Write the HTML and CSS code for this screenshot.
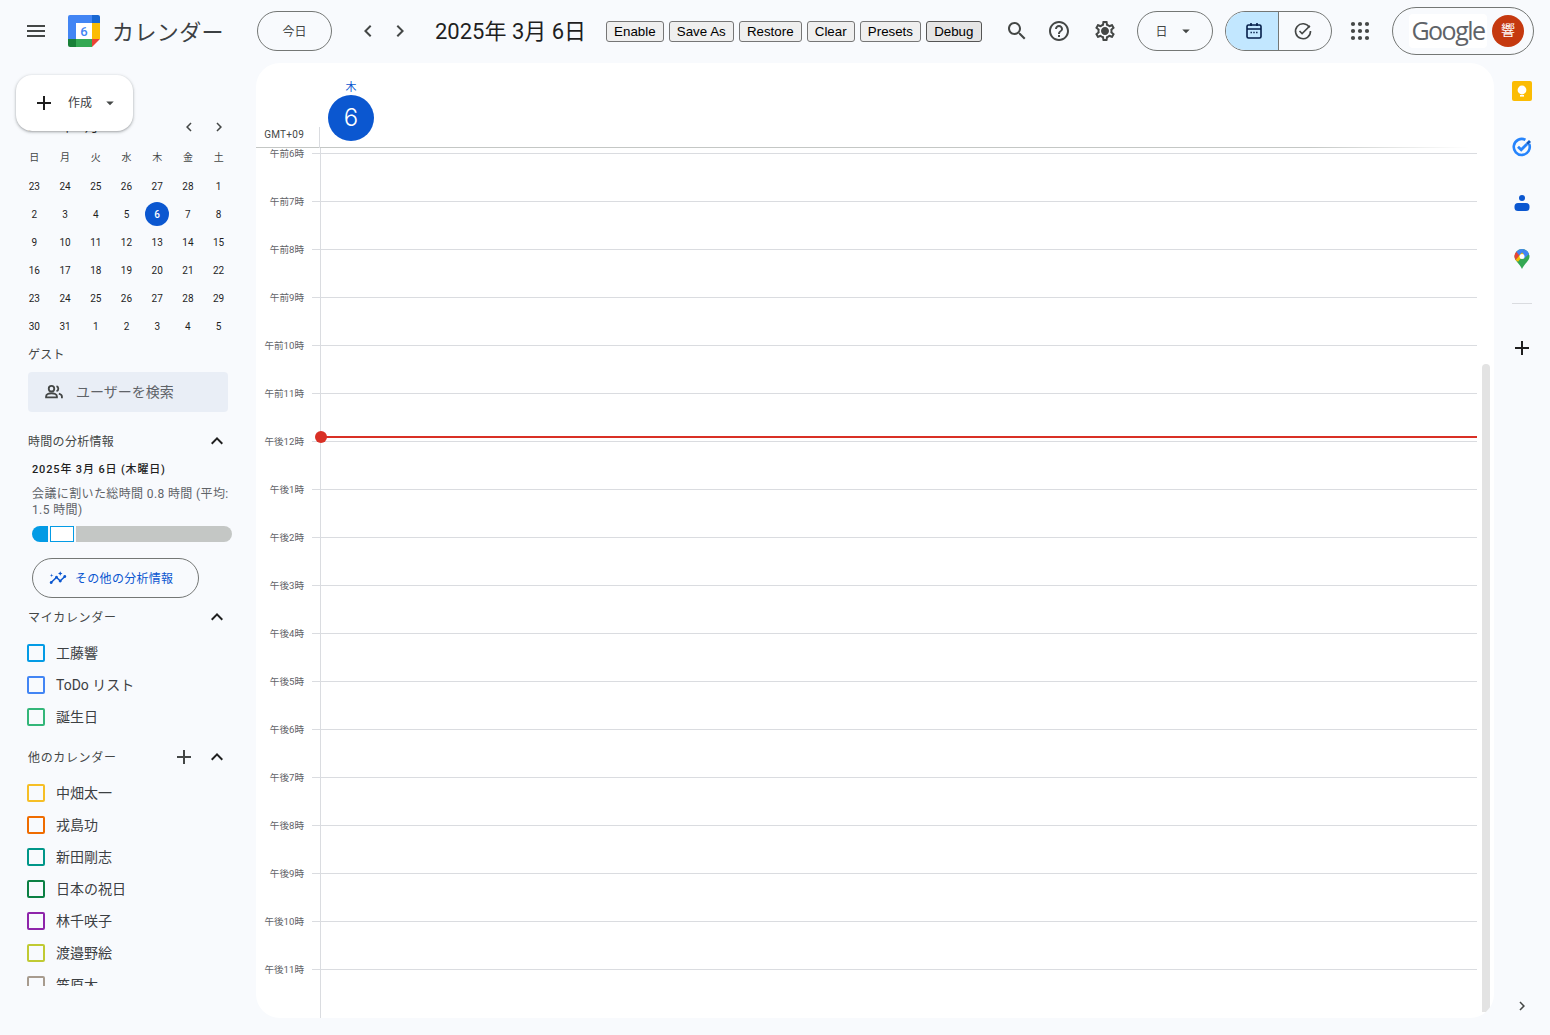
FILE: index.html
```html
<!DOCTYPE html>
<html lang="ja">
<head>
    <meta charset="UTF-8">
    <meta name="viewport" content="width=device-width, initial-scale=1.0">
    <title>カレンダー</title>
    <link rel="stylesheet" href="styles.css">
</head>
<body>
    <svg class="defs" width="0" height="0">
        <symbol id="i-menu" viewBox="0 0 24 24"><path d="M3 18h18v-2H3v2zm0-5h18v-2H3v2zm0-7v2h18V6H3z"/></symbol>
        <symbol id="i-left" viewBox="0 0 24 24"><path d="M15.41 7.41L14 6l-6 6 6 6 1.41-1.41L10.83 12z"/></symbol>
        <symbol id="i-right" viewBox="0 0 24 24"><path d="M10 6L8.59 7.41 13.17 12l-4.58 4.59L10 18l6-6z"/></symbol>
        <symbol id="i-up" viewBox="0 0 24 24"><path d="M12 8l-6 6 1.41 1.41L12 10.83l4.59 4.58L18 14z"/></symbol>
        <symbol id="i-add" viewBox="0 0 24 24"><path d="M19 13h-6v6h-2v-6H5v-2h6V5h2v6h6v2z"/></symbol>
        <symbol id="i-drop" viewBox="0 0 24 24"><path d="M7 10l5 5 5-5z"/></symbol>
    </svg>

    <header class="topbar">
        <button class="icon-btn menu-btn"><svg class="ico24"><use href="#i-menu"/></svg></button>
        <svg class="logo" viewBox="0 0 32 32" width="32" height="32">
            <path d="M2 0h22v8H8v16H0V2a2 2 0 0 1 2-2z" fill="#4285f4"/>
            <path d="M24 0h6a2 2 0 0 1 2 2v6h-8z" fill="#1967d2"/>
            <rect x="24" y="8" width="8" height="16" fill="#fbbc04"/>
            <rect x="8" y="24" width="16" height="8" fill="#34a853"/>
            <path d="M0 24h8v8H2a2 2 0 0 1-2-2z" fill="#188038"/>
            <path d="M24 24h8l-8 8z" fill="#ea4335"/>
            <rect x="8" y="8" width="16" height="16" fill="#fff"/>
            <text x="16" y="21" text-anchor="middle" class="logo-num">6</text>
        </svg>
        <span class="brand">カレンダー</span>
        <button class="pill today">今日</button>
        <button class="icon-btn nav-prev"><svg class="ico24"><use href="#i-left"/></svg></button>
        <button class="icon-btn nav-next"><svg class="ico24"><use href="#i-right"/></svg></button>
        <span class="date-title">2025年 3月 6日</span>
        <div class="ext-btns">
            <button class="ext">Enable</button>
            <button class="ext">Save As</button>
            <button class="ext">Restore</button>
            <button class="ext">Clear</button>
            <button class="ext">Presets</button>
            <button class="ext ext-on">Debug</button>
        </div>
        <button class="icon-btn search-btn">
            <svg class="ico24" viewBox="0 0 24 24"><path d="M15.5 14h-.79l-.28-.27C15.41 12.59 16 11.11 16 9.5 16 5.91 13.09 3 9.5 3S3 5.91 3 9.5 5.91 16 9.5 16c1.61 0 3.09-.59 4.23-1.57l.27.28v.79l5 4.99L20.49 19l-4.99-5zm-6 0C7.01 14 5 11.99 5 9.5S7.01 5 9.5 5 14 7.01 14 9.5 11.99 14 9.5 14z"/></svg>
        </button>
        <button class="icon-btn help-btn">
            <svg class="ico24" viewBox="0 0 24 24"><path d="M11 18h2v-2h-2v2zm1-16C6.48 2 2 6.48 2 12s4.48 10 10 10 10-4.48 10-10S17.52 2 12 2zm0 18c-4.41 0-8-3.59-8-8s3.59-8 8-8 8 3.59 8 8-3.59 8-8 8zm0-14c-2.21 0-4 1.79-4 4h2c0-1.1.9-2 2-2s2 .9 2 2c0 2-3 1.75-3 5h2c0-2.25 3-2.5 3-5 0-2.21-1.79-4-4-4z"/></svg>
        </button>
        <button class="icon-btn gear-btn">
            <svg class="ico24" viewBox="0 0 24 24"><path d="M19.43 12.98c.04-.32.07-.64.07-.98 0-.34-.03-.66-.07-.98l2.11-1.65c.19-.15.24-.42.12-.64l-2-3.46c-.09-.16-.26-.25-.44-.25-.06 0-.12.01-.17.03l-2.49 1c-.52-.4-1.08-.73-1.69-.98l-.38-2.65C14.46 2.18 14.25 2 14 2h-4c-.25 0-.46.18-.49.42l-.38 2.65c-.61.25-1.17.59-1.69.98l-2.49-1c-.06-.02-.12-.03-.18-.03-.17 0-.34.09-.43.25l-2 3.46c-.13.22-.07.49.12.64l2.11 1.65c-.04.32-.07.65-.07.98 0 .33.03.66.07.98l-2.11 1.65c-.19.15-.24.42-.12.64l2 3.46c.09.16.26.25.44.25.06 0 .12-.01.17-.03l2.49-1c.52.4 1.08.73 1.69.98l.38 2.65c.03.24.24.42.49.42h4c.25 0 .46-.18.49-.42l.38-2.65c.61-.25 1.17-.59 1.69-.98l2.49 1c.06.02.12.03.18.03.17 0 .34-.09.43-.25l2-3.46c.12-.22.07-.49-.12-.64l-2.11-1.65zm-1.98-1.71c.04.31.05.52.05.73 0 .21-.02.43-.05.73l-.14 1.13.89.7 1.08.84-.7 1.21-1.27-.51-1.04-.42-.9.68c-.43.32-.84.56-1.25.73l-1.06.43-.16 1.13-.2 1.35h-1.4l-.19-1.35-.16-1.13-1.06-.43c-.43-.18-.83-.41-1.23-.71l-.91-.7-1.06.43-1.27.51-.7-1.21 1.08-.84.89-.7-.14-1.13c-.03-.31-.05-.54-.05-.74s.02-.43.05-.73l.14-1.13-.89-.7-1.08-.84.7-1.21 1.27.51 1.04.42.9-.68c.43-.32.84-.56 1.25-.73l1.06-.43.16-1.13.2-1.35h1.39l.19 1.35.16 1.13 1.06.43c.43.18.83.41 1.23.71l.91.7 1.06-.43 1.27-.51.7 1.21-1.07.85-.89.7.14 1.13zM12 8c-2.21 0-4 1.79-4 4s1.79 4 4 4 4-1.79 4-4-1.79-4-4-4z"/></svg>
        </button>
        <button class="pill view-select"><span>日</span><svg class="ico18"><use href="#i-drop"/></svg></button>
        <div class="toggle">
            <span class="toggle-item toggle-on">
                <svg width="20" height="20" viewBox="0 0 20 20" fill="none" stroke="#041e49" stroke-width="1.6"><rect x="3" y="4" width="14" height="13" rx="1.5"/><path d="M3 8h14M7 2v3M13 2v3"/><path d="M6.5 11.5h1.4M9.3 11.5h1.4M12.1 11.5h1.4" stroke-width="1.3"/></svg>
            </span>
            <span class="toggle-item toggle-off">
                <svg width="20" height="20" viewBox="0 0 20 20" fill="none" stroke="#444746" stroke-width="1.6"><path d="M16.5 6.500A7.500 7.500 0 1 0 17.500 10"/><path d="M6.500 10l2.600 2.600L17 4.800"/></svg>
            </span>
        </div>
        <button class="icon-btn apps-btn">
            <svg width="24" height="24" viewBox="0 0 24 24" fill="#444746"><circle cx="5" cy="5" r="2.1"/><circle cx="12" cy="5" r="2.1"/><circle cx="19" cy="5" r="2.1"/><circle cx="5" cy="12" r="2.1"/><circle cx="12" cy="12" r="2.1"/><circle cx="19" cy="12" r="2.1"/><circle cx="5" cy="19" r="2.1"/><circle cx="12" cy="19" r="2.1"/><circle cx="19" cy="19" r="2.1"/></svg>
        </button>
        <div class="account">
            <span class="google-word">Google</span>
            <span class="avatar">響</span>
        </div>
    </header>

    <div class="content">
        <aside class="sidebar">
            <button class="create">
                <svg class="ico-create"><use href="#i-add"/></svg>
                <span>作成</span>
                <svg class="ico18"><use href="#i-drop"/></svg>
            </button>

            <div class="mini-nav">
                <span class="mini-title">2025年 3月</span>
                <svg class="ico18"><use href="#i-left"/></svg>
                <svg class="ico18"><use href="#i-right"/></svg>
            </div>
            <div class="mini-cal">
                <span class="dow">日</span><span class="dow">月</span><span class="dow">火</span><span class="dow">水</span><span class="dow">木</span><span class="dow">金</span><span class="dow">土</span>
                <span>23</span><span>24</span><span>25</span><span>26</span><span>27</span><span>28</span><span>1</span>
                <span>2</span><span>3</span><span>4</span><span>5</span><span class="sel">6</span><span>7</span><span>8</span>
                <span>9</span><span>10</span><span>11</span><span>12</span><span>13</span><span>14</span><span>15</span>
                <span>16</span><span>17</span><span>18</span><span>19</span><span>20</span><span>21</span><span>22</span>
                <span>23</span><span>24</span><span>25</span><span>26</span><span>27</span><span>28</span><span>29</span>
                <span>30</span><span>31</span><span>1</span><span>2</span><span>3</span><span>4</span><span>5</span>
            </div>

            <div class="guest-label">ゲスト</div>
            <div class="guest-search">
                <svg class="people" width="20" height="20" viewBox="0 0 24 24" fill="none" stroke="#444746" stroke-width="2.2"><circle cx="9" cy="8" r="3.300"/><path d="M2.500 18.500v-1.200c0-2.300 3.300-3.800 6.500-3.800s6.500 1.500 6.500 3.800v1.200z"/><path d="M15 4.900a3.300 3.300 0 0 1 0 6.200"/><path d="M17.800 13.900c2 .6 3.700 1.800 3.700 3.500v2.100"/></svg>
                <span>ユーザーを検索</span>
            </div>

            <div class="sec-head insights-head">
                <span>時間の分析情報</span>
                <svg class="ico24 chev"><use href="#i-up"/></svg>
            </div>
            <div class="ins-date">2025年 3月 6日 (木曜日)</div>
            <div class="ins-desc">会議に割いた総時間 0.8 時間 (平均: 1.5 時間)</div>
            <div class="ins-bar">
                <span class="bar-a"></span>
                <span class="bar-b"></span>
                <span class="bar-c"></span>
            </div>
            <button class="more-btn">
                <svg width="18" height="18" viewBox="0 0 24 24" fill="#0b57d0"><path d="M21 8c-1.45 0-2.26 1.44-1.93 2.51l-3.55 3.56c-.3-.09-.74-.09-1.04 0l-2.55-2.55C12.27 10.45 11.46 9 10 9c-1.45 0-2.27 1.44-1.93 2.52l-4.56 4.55C2.44 15.74 1 16.55 1 18c0 1.1.9 2 2 2 1.45 0 2.26-1.44 1.93-2.51l4.55-4.56c.3.09.74.09 1.04 0l2.55 2.55C12.73 16.55 13.54 18 15 18c1.45 0 2.27-1.44 1.93-2.52l3.56-3.55C21.56 12.26 23 11.45 23 10c0-1.1-.9-2-2-2z"/><path d="M15 9l.94-2.07L18 6l-2.06-.93L15 3l-.92 2.07L12 6l2.08.93zM3.500 11L4 9l2-.5L4 8l-.5-2L3 8l-2 .5L3 9z"/></svg>
                <span>その他の分析情報</span>
            </button>

            <div class="sec-head mine-head">
                <span>マイカレンダー</span>
                <svg class="ico24 chev"><use href="#i-up"/></svg>
            </div>
            <ul class="cal-list">
                <li><i class="box c-sky"></i>工藤響</li>
                <li><i class="box c-blue"></i>ToDo リスト</li>
                <li><i class="box c-mint"></i>誕生日</li>
            </ul>

            <div class="sec-head other-head">
                <span>他のカレンダー</span>
                <svg class="ico24 add-cal"><use href="#i-add"/></svg>
                <svg class="ico24 chev"><use href="#i-up"/></svg>
            </div>
            <ul class="cal-list">
                <li><i class="box c-yellow"></i>中畑太一</li>
                <li><i class="box c-orange"></i>戎島功</li>
                <li><i class="box c-teal"></i>新田剛志</li>
                <li><i class="box c-green"></i>日本の祝日</li>
                <li><i class="box c-purple"></i>林千咲子</li>
                <li><i class="box c-olive"></i>渡邉野絵</li>
                <li><i class="box c-brown"></i>笠原大</li>
            </ul>
        </aside>

        <main class="card">
            <div class="day-head">
                <div class="day-col">
                    <span class="day-dow">木</span>
                    <span class="day-num">6</span>
                </div>
                <span class="tz">GMT+09</span>
            </div>
            <div class="hours">
                <div class="hour"><span>午前6時</span><i></i></div>
                <div class="hour"><span>午前7時</span><i></i></div>
                <div class="hour"><span>午前8時</span><i></i></div>
                <div class="hour"><span>午前9時</span><i></i></div>
                <div class="hour"><span>午前10時</span><i></i></div>
                <div class="hour"><span>午前11時</span><i></i></div>
                <div class="hour"><span>午後12時</span><i></i></div>
                <div class="hour"><span>午後1時</span><i></i></div>
                <div class="hour"><span>午後2時</span><i></i></div>
                <div class="hour"><span>午後3時</span><i></i></div>
                <div class="hour"><span>午後4時</span><i></i></div>
                <div class="hour"><span>午後5時</span><i></i></div>
                <div class="hour"><span>午後6時</span><i></i></div>
                <div class="hour"><span>午後7時</span><i></i></div>
                <div class="hour"><span>午後8時</span><i></i></div>
                <div class="hour"><span>午後9時</span><i></i></div>
                <div class="hour"><span>午後10時</span><i></i></div>
                <div class="hour"><span>午後11時</span><i></i></div>
                <div class="now-line"></div>
                <div class="scrollbar"></div>
            </div>
        </main>

        <nav class="rail">
            <span class="rail-item">
                <svg width="20" height="20" viewBox="0 0 20 20"><rect width="20" height="20" rx="2" fill="#fbbc04"/><circle cx="10" cy="9" r="4.400" fill="#fff"/><rect x="8" y="14" width="4" height="1.600" fill="#fff"/></svg>
            </span>
            <span class="rail-item">
                <svg width="20" height="20" viewBox="0 0 20 20" fill="none" stroke="#2684fc" stroke-width="2.600"><path d="M17.200 7a8 8 0 1 1-3.800-4.200"/><path d="M6 9.800l3.200 3L15 7" stroke-width="2.800"/><path d="M15 7l3-3" stroke="#0f5bc4" stroke-width="2.800"/></svg>
            </span>
            <span class="rail-item">
                <svg width="20" height="20" viewBox="0 0 20 20" fill="#0b57d0"><circle cx="10" cy="5" r="3"/><rect x="2.500" y="10" width="15" height="8" rx="3.500"/></svg>
            </span>
            <span class="rail-item">
                <svg width="16" height="20" viewBox="0 0 16 20"><path d="M8 0a7.500 7.500 0 0 1 7.500 7.500C15.500 12 10 15 8 20 6 15 .5 12 .5 7.500A7.500 7.500 0 0 1 8 0z" fill="#34a853"/><path d="M2.300 2.700A7.500 7.500 0 0 0 .5 7.500c0 1.300.5 2.400 1.100 3.400L8 3.500z" fill="#ea4335"/><path d="M2.300 2.700A7.500 7.500 0 0 1 8 0c.9 0 1.800.2 2.600.5L5.400 6.500z" fill="#4285f4"/><path d="M10.600.5a7.500 7.500 0 0 1 4.500 4.600L9.900 9.900 6 6z" fill="#4285f4"/><path d="M1.600 10.900L8 3.500l2 2-6 7.300z" fill="#fbbc04"/><circle cx="8" cy="7.500" r="2.500" fill="#fff"/></svg>
            </span>
            <span class="rail-sep"></span>
            <svg class="ico24 rail-add"><use href="#i-add"/></svg>
            <svg class="ico18 rail-more"><use href="#i-right"/></svg>
        </nav>
    </div>
</body>
</html>
```

FILE: styles.css
```css
* {
    box-sizing: border-box;
}
html, body {
    margin: 0;
    height: 100%;
}
body {
    font-family: Roboto, "Noto Sans CJK JP", sans-serif;
    color: #1f1f1f;
    background: #f8fafd;
    overflow: hidden;
}
button {
    font-family: inherit;
    padding: 0;
}
.defs {
    position: absolute;
}
.ico24, .ico20, .ico18 {
    display: block;
    fill: #444746;
    flex: none;
}
.ico24 { width: 24px; height: 24px; }
.ico20 { width: 20px; height: 20px; }
.ico18 { width: 18px; height: 18px; }

/* top bar */
.topbar {
    height: 62px;
    margin-bottom: 1px;
    display: flex;
    align-items: center;
}
.icon-btn {
    width: 24px;
    height: 24px;
    border: 0;
    background: none;
    flex: none;
}
.menu-btn { margin-left: 24px; }
.logo {
    margin-left: 20px;
    flex: none;
}
.logo-num {
    font: 500 13px Roboto, sans-serif;
    fill: #4285f4;
}
.brand {
    margin-left: 12px;
    width: 145px;
    padding-bottom: 3px;
    font-size: 22px;
    letter-spacing: .4px;
    color: #3c4043;
}
.pill {
    height: 40px;
    border: 1px solid #747775;
    border-radius: 20px;
    background: none;
    font-size: 12px;
    color: #444746;
    flex: none;
}
.today {
    width: 75px;
    padding-bottom: 2px;
}
.nav-prev { margin-left: 24px; }
.nav-next { margin-left: 8px; }
.date-title {
    margin-left: 23px;
    width: 171px;
    padding-bottom: 5px;
    font-size: 22px;
    white-space: nowrap;
    color: #1f1f1f;
}
.ext-btns {
    display: flex;
    gap: 5px;
    width: 375px;
    margin-top: 1px;
}
.ext {
    height: 21px;
    padding: 0 7.1px;
    font: 13.33px "Liberation Sans", sans-serif;
    white-space: nowrap;
    flex: none;
    color: #000;
    background: #efefef;
    border: 1px solid #767676;
    border-radius: 3px;
}
.ext-on {
    background: #e5e5e5;
    border-color: #555;
}
.search-btn { margin-left: 24px; }
.help-btn { margin-left: 18px; }
.gear-btn { margin-left: 22px; }
.view-select {
    width: 76px;
    margin-left: 20px;
    display: flex;
    align-items: center;
    justify-content: center;
    gap: 9px;
}
.view-select span {
    padding-bottom: 2px;
}
.toggle {
    width: 107px;
    height: 40px;
    margin-left: 12px;
    display: flex;
    border: 1px solid #747775;
    border-radius: 20px;
    overflow: hidden;
    flex: none;
}
.toggle-item {
    flex: 1;
    display: flex;
    align-items: center;
    justify-content: center;
}
.toggle-on {
    background: #c2e7ff;
    border-right: 1px solid #747775;
    flex: none;
    width: 53px;
    padding-left: 4px;
}
.toggle-off {
    padding-right: 4px;
}
.apps-btn { margin-left: 16px; }
.account {
    width: 142px;
    height: 48px;
    margin-left: 20px;
    padding-left: 16px;
    display: flex;
    align-items: center;
    gap: 5px;
    border: 1px solid #747775;
    border-radius: 24px;
    flex: none;
}
.google-word {
    width: 78px;
    height: 34px;
    background: #fff;
    border-radius: 4px;
    font: 25px/32px "Open Sans", sans-serif;
    letter-spacing: -1.5px;
    color: #5f6368;
    text-align: center;
}
.avatar {
    width: 32px;
    height: 32px;
    border-radius: 50%;
    background: #c5390f;
    color: #fff;
    font-size: 14px;
    line-height: 30px;
    text-align: center;
}

/* body layout */
.content {
    display: flex;
    height: 955px;
}
.sidebar {
    position: relative;
    width: 256px;
    height: 923px;
    overflow: hidden;
    flex: none;
}
.create {
    position: absolute;
    left: 16px;
    top: 12px;
    z-index: 2;
    width: 117px;
    height: 56px;
    display: flex;
    align-items: center;
    padding-left: 16px;
    background: #fff;
    border: 0;
    border-radius: 16px;
    box-shadow: 0 1px 2px rgba(60,64,67,.3), 0 1px 3px 1px rgba(60,64,67,.15);
    font-size: 12px;
    color: #3c4043;
}
.create span {
    padding-bottom: 3px;
}
.ico-create {
    width: 24px;
    height: 24px;
    fill: #1f1f1f;
    margin-right: 12px;
}
.create .ico18 {
    margin-left: 9px;
}

/* mini calendar */
.mini-nav {
    height: 28px;
    margin-top: 50px;
    margin-bottom: 3px;
    padding: 0 28px 0 28px;
    display: flex;
    align-items: center;
    gap: 12px;
    font-size: 14px;
}
.mini-title {
    flex: 1;
    padding-bottom: 4px;
}
.mini-cal {
    margin-left: 19px;
    width: 215px;
    display: grid;
    grid-template-columns: repeat(7, 1fr);
    grid-auto-rows: 28px;
    font-size: 10px;
    color: #1f1f1f;
}
.mini-cal span {
    display: flex;
    align-items: center;
    justify-content: center;
}
.mini-cal .dow {
    padding-bottom: 3px;
    color: #444746;
}
.mini-cal .sel {
    justify-self: center;
    align-self: center;
    width: 24px;
    height: 24px;
    border-radius: 50%;
    background: #0b57d0;
    color: #fff;
    font-weight: 500;
}

/* guests and insights */
.guest-label {
    height: 28px;
    margin-left: 28px;
    font-size: 12px;
    line-height: 30px;
    letter-spacing: .2px;
    color: #444746;
}
.guest-search {
    width: 200px;
    height: 40px;
    margin: 4px 0 0 28px;
    padding-left: 16px;
    display: flex;
    align-items: center;
    gap: 12px;
    background: #e9eef6;
    border-radius: 4px;
    font-size: 14px;
    color: #5f6368;
}
.guest-search span {
    padding-bottom: 3px;
}
.people {
    flex: none;
}
.sec-head {
    height: 32px;
    margin-left: 28px;
    width: 201px;
    display: flex;
    align-items: center;
    font-size: 12px;
    letter-spacing: .3px;
    color: #444746;
}
.sec-head span {
    flex: 1;
    padding-bottom: 2px;
}
.chev {
    fill: #1f1f1f;
}
.add-cal {
    margin-right: 9px;
}
.insights-head { margin-top: 13px; }
.mine-head { margin-top: 3px; letter-spacing: .65px; }
.other-head { margin-top: 8px; letter-spacing: .65px; }
.ins-date {
    height: 16px;
    margin: 5px 0 0 32px;
    font-size: 11px;
    line-height: 16px;
    font-weight: 500;
    letter-spacing: .85px;
    color: #1f1f1f;
}
.ins-desc {
    width: 200px;
    margin: 8px 0 0 32px;
    font-size: 12px;
    line-height: 16px;
    letter-spacing: .38px;
    color: #5f6368;
}
.ins-bar {
    width: 200px;
    height: 16px;
    margin: 8px 0 0 32px;
    display: flex;
    gap: 2px;
}
.bar-a {
    width: 16px;
    background: #039be5;
    border-radius: 8px 0 0 8px;
}
.bar-b {
    width: 24px;
    background: #fff;
    border: 1px solid #039be5;
}
.bar-c {
    flex: 1;
    background: #c4c7c5;
    border-radius: 0 8px 8px 0;
}
.more-btn {
    width: 167px;
    height: 40px;
    margin: 16px 0 0 32px;
    padding-left: 16px;
    display: flex;
    align-items: center;
    gap: 8px;
    background: none;
    border: 1px solid #747775;
    border-radius: 20px;
    font-size: 12px;
    letter-spacing: .3px;
    color: #0b57d0;
}
.more-btn span {
    padding-bottom: 2px;
}

/* calendar lists */
.cal-list {
    list-style: none;
    margin: 4px 0 0;
    padding: 0 0 0 27px;
}
.cal-list li {
    height: 32px;
    padding-bottom: 2px;
    display: flex;
    align-items: center;
    gap: 11px;
    font-size: 14px;
    color: #3c4043;
}
.box {
    width: 18px;
    height: 18px;
    margin-top: 2px;
    border: 2px solid;
    border-radius: 2px;
    flex: none;
}
.c-sky { color: #039be5; }
.c-blue { color: #4285f4; }
.c-mint { color: #33b679; }
.c-yellow { color: #f6bf26; }
.c-orange { color: #ef6c00; }
.c-teal { color: #009688; }
.c-green { color: #0b8043; }
.c-purple { color: #8e24aa; }
.c-olive { color: #c0ca33; }
.c-brown { color: #a79b8e; }

/* day view */
.card {
    width: 1238px;
    height: 955px;
    display: flex;
    flex-direction: column;
    background: #fff;
    border-radius: 24px;
    overflow: hidden;
    flex: none;
}
.day-head {
    position: relative;
    height: 85px;
    flex: none;
    background: linear-gradient(90deg, #c4c7c5 0, #c4c7c5 85%, #fff 98%) left bottom / 100% 1px no-repeat;
}
.day-col {
    position: absolute;
    left: 72px;
    top: 16px;
    width: 46px;
    display: flex;
    flex-direction: column;
    align-items: center;
}
.day-dow {
    height: 16px;
    padding-top: 1px;
    font-size: 11px;
    line-height: 15px;
    color: #0b57d0;
}
.day-num {
    width: 46px;
    height: 46px;
    border-radius: 50%;
    background: #0b57d0;
    color: #fff;
    font: 300 24px/46px Inter, sans-serif;
    text-align: center;
}
.tz {
    position: absolute;
    left: 0;
    bottom: 7px;
    width: 48px;
    height: 13px;
    font-size: 10px;
    line-height: 13px;
    letter-spacing: .25px;
    text-align: right;
    white-space: nowrap;
    color: #444746;
}
.day-head::after {
    content: "";
    position: absolute;
    left: 63px;
    top: 64px;
    width: 1px;
    height: 21px;
    background: #dadce0;
}
.hours {
    position: relative;
    flex: 1;
    padding: 5px 17px 0 0;
}
.hours::before {
    content: "";
    position: absolute;
    left: 64px;
    top: 0;
    bottom: 0;
    width: 1px;
    background: #dadce0;
}
.hour {
    height: 48px;
    display: flex;
}
.hour span {
    width: 48px;
    height: 14px;
    margin-top: -6px;
    font-size: 9.6px;
    line-height: 14px;
    text-align: right;
    color: #5f6368;
    white-space: nowrap;
}
.hour i {
    flex: 1;
    height: 1px;
    margin-left: 8px;
    background: #dadce0;
}
.now-line {
    position: absolute;
    left: 64px;
    right: 17px;
    top: 288px;
    height: 2px;
    background: #d93025;
}
.now-line::before {
    content: "";
    position: absolute;
    left: -5px;
    top: -5px;
    width: 12px;
    height: 12px;
    border-radius: 50%;
    background: #d93025;
}
.scrollbar {
    position: absolute;
    right: 4px;
    top: 216px;
    width: 8px;
    bottom: 6px;
    background: #e3e3e3;
    border-radius: 4px 4px 0 0;
}

/* right rail */
.rail {
    position: relative;
    width: 56px;
    flex: none;
    display: flex;
    flex-direction: column;
    align-items: center;
}
.rail-item {
    width: 56px;
    height: 56px;
    display: flex;
    align-items: center;
    justify-content: center;
}
.rail-sep {
    width: 20px;
    height: 1px;
    margin-top: 16px;
    background: #dadce0;
}
.rail-add {
    margin-top: 32px;
    fill: #1f1f1f;
}
.rail-more {
    position: absolute;
    left: 19px;
    top: 934px;
}
```
